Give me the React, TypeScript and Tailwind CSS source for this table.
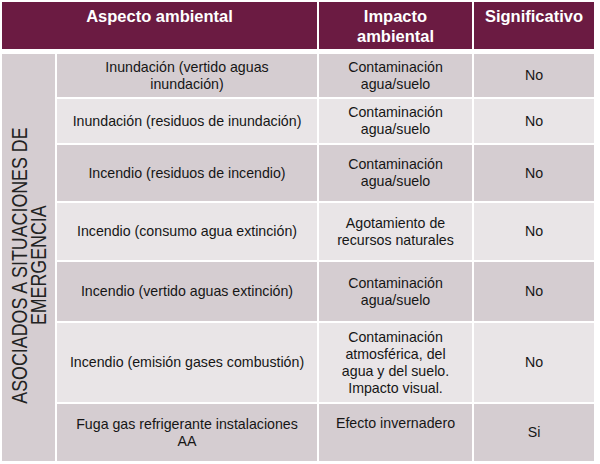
import React from "react";

const rows: { aspecto: string[]; impacto: string[]; sig: string; dark: boolean; impactoTop?: boolean }[] = [
  { aspecto: ["Inundación (vertido aguas", "inundación)"], impacto: ["Contaminación", "agua/suelo"], sig: "No", dark: true },
  { aspecto: ["Inundación (residuos de inundación)"], impacto: ["Contaminación", "agua/suelo"], sig: "No", dark: false },
  { aspecto: ["Incendio (residuos de incendio)"], impacto: ["Contaminación", "agua/suelo"], sig: "No", dark: true },
  { aspecto: ["Incendio (consumo agua extinción)"], impacto: ["Agotamiento de", "recursos naturales"], sig: "No", dark: false },
  { aspecto: ["Incendio (vertido aguas extinción)"], impacto: ["Contaminación", "agua/suelo"], sig: "No", dark: true },
  {
    aspecto: ["Incendio (emisión gases combustión)"],
    impacto: ["Contaminación", "atmosférica, del", "agua y del suelo.", "Impacto visual."],
    sig: "No",
    dark: false,
  },
  {
    aspecto: ["Fuga gas refrigerante instalaciones", "AA"],
    impacto: ["Efecto invernadero"],
    sig: "Si",
    dark: true,
    impactoTop: true,
  },
];

function Lines({ lines }: { lines: string[] }) {
  return (
    <>
      {lines.map((l, i) => (
        <div key={i}>{l}</div>
      ))}
    </>
  );
}

export default function App() {
  return (
    <div className="w-[600px] h-[464px] bg-white pl-[2px] pt-[2px] font-['Liberation_Sans',Arial,sans-serif]">
      {/* Header */}
      <div className="grid grid-cols-[315px_153px_120px] gap-x-[2px] h-[47px] w-[592px] text-white font-bold text-[16.5px] leading-[20px]">
        <div className="bg-[#6b1b42] text-center pt-[4px]">Aspecto ambiental</div>
        <div className="bg-[#6b1b42] text-center pt-[4px]">
          Impacto
          <br />
          ambiental
        </div>
        <div className="bg-[#6b1b42] text-center pt-[4px]">Significativo</div>
      </div>

      {/* Body */}
      <div className="mt-[5px] grid w-[592px] grid-cols-[53px_260px_153px_120px] grid-rows-[43px_44px_56px_57px_59px_79px_57px] gap-[2px] text-[14.2px] leading-[17px] text-[#161616]">
        <div className="row-span-7 bg-[#d5cdd1] flex items-center justify-center pt-[16px]">
          <div className="[writing-mode:vertical-rl] rotate-180 scale-y-[0.81] whitespace-nowrap text-center text-[22px] leading-[19px] text-[#222222]">
            ASOCIADOS A SITUACIONES DE
            <br />
            EMERGENCIA
          </div>
        </div>
        {rows.map((r, i) => {
          const bg = r.dark ? "bg-[#d5cdd1]" : "bg-[#e9e5e7]";
          return (
            <React.Fragment key={i}>
              <div className={`${bg} flex flex-col items-center justify-center text-center`}>
                <Lines lines={r.aspecto} />
              </div>
              <div
                className={`${bg} flex flex-col items-center text-center ${
                  r.impactoTop ? "justify-start pt-[11px]" : "justify-center"
                }`}
              >
                <Lines lines={r.impacto} />
              </div>
              <div className={`${bg} flex items-center justify-center`}>{r.sig}</div>
            </React.Fragment>
          );
        })}
      </div>
    </div>
  );
}
